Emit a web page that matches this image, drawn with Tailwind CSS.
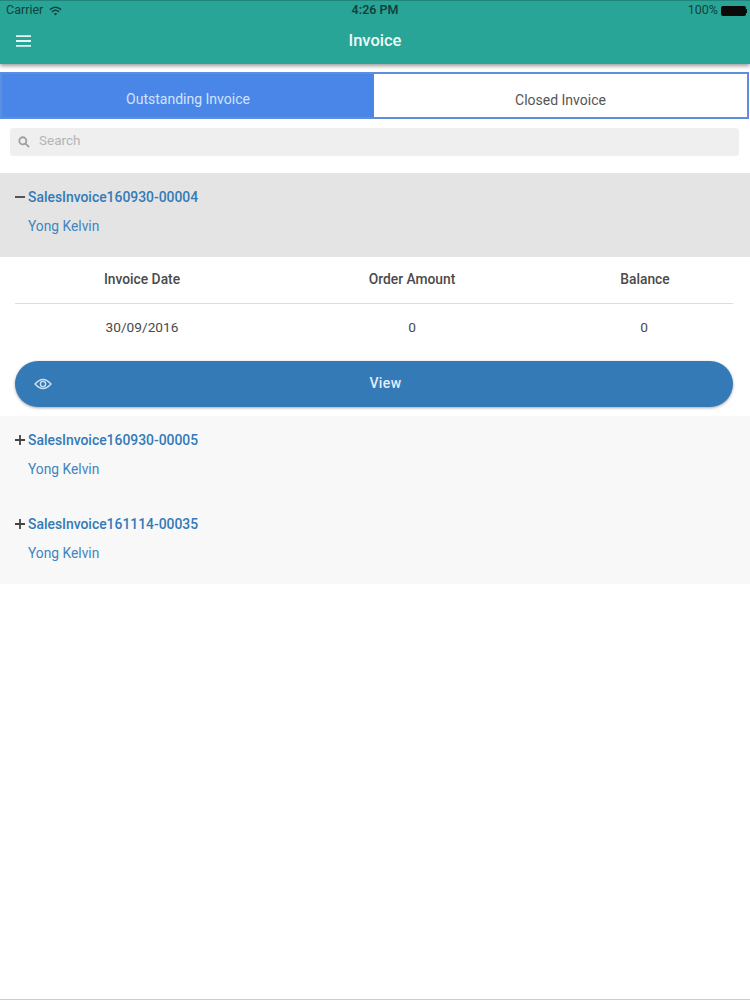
<!DOCTYPE html>
<html lang="en">
<head>
<meta charset="UTF-8" />
<title>Invoice</title>
<script src="https://cdn.jsdelivr.net/npm/@tailwindcss/browser@4"></script>
</head>
<body class="bg-white font-['Roboto',sans-serif] text-[#4a4a4a]">
<div class="w-[750px] h-[1000px] overflow-hidden flex flex-col border-b border-[#ccc]">
  <!-- header -->
  <div class="h-[64px] bg-[#28a596] border-t border-[#1f8578] shadow-[0_2px_4px_rgba(0,0,0,0.4)] text-white shrink-0">
    <div class="h-[19px] flex items-center justify-between pl-[6px] pr-[3px] text-[12.5px] text-[#12423d] relative">
      <div class="flex items-center gap-[6px]">
        <span>Carrier</span>
        <svg width="13" height="10" viewBox="0 0 13 10" fill="none" stroke="#12423d" stroke-width="1.5"><path d="M0.8 3.6Q6.5 -1.2 12.2 3.6"/><path d="M2.9 5.8Q6.5 2.8 10.1 5.8"/><path d="M6.5 9.6L4.8 7.7Q6.5 6.4 8.2 7.7Z" fill="#12423d" stroke="none"/></svg>
      </div>
      <span class="font-semibold">4:26 PM</span>
      <div class="flex items-center gap-[3px]">
        <span>100%</span>
        <span class="w-[25px] h-[10px] bg-[#0a0a0a] rounded-[2px]"></span>
        <span class="w-[1px] h-[4px] bg-[#0a0a0a] -ml-[3px]"></span>
      </div>
    </div>
    <div class="h-[42px] flex items-center justify-between pl-[16px] pr-[16px]">
      <svg width="15" height="12" viewBox="0 0 15 12"><path d="M0 1.2H15M0 6H15M0 10.8H15" stroke="#e4f5f2" stroke-width="1.8"/></svg>
      <span class="text-[16.5px] font-medium text-[#eef9f7]">Invoice</span>
      <span class="w-[15px]"></span>
    </div>
  </div>
  <!-- tabs -->
  <div class="mt-[8px] mr-[1px] h-[47px] flex border-2 border-[#5b8fe0] shrink-0">
    <div class="w-[372px] bg-[#4a86e8] text-[#d3e3fb] text-[14px] flex items-center justify-center pt-[7px]">Outstanding Invoice</div>
    <div class="flex-1 bg-white text-[#555] text-[14px] flex items-center justify-center pt-[10px]">Closed Invoice</div>
  </div>
  <!-- search -->
  <div class="ml-[10px] mr-[11px] mt-[9px] h-[28px] bg-[#efefef] rounded-[3px] flex items-start pt-[4px] pl-[8px] gap-[9px] shrink-0">
    <svg class="mt-[4px]" width="12" height="12" viewBox="0 0 13 13" fill="none" stroke="#a0a0a0" stroke-width="2"><circle cx="5.2" cy="5.2" r="3.8"/><path d="M8 8L12 12"/></svg>
    <span class="text-[13.5px] leading-[16px] text-[#b4b4b4]">Search</span>
  </div>
  <!-- open row -->
  <div class="mt-[17px] h-[84px] bg-[#e4e4e4] px-[15px] pt-[15px] shrink-0">
    <div class="flex items-center gap-[3px] text-[13.9px] leading-[18px] font-medium text-[#337ab7]">
      <svg width="10" height="10" viewBox="0 0 10 10"><path d="M0 5H10" stroke="#444" stroke-width="1.8"/></svg>
      <span>SalesInvoice160930-00004</span>
    </div>
    <div class="pl-[13px] mt-[11px] text-[13.8px] leading-[18px] text-[#3f85c0]">Yong Kelvin</div>
  </div>
  <!-- detail -->
  <div class="pl-[15px] pr-[17px] shrink-0">
    <div class="grid grid-cols-[254px_286px_178px] h-[47px] pb-[2px] items-center text-center text-[13.8px] font-medium border-b border-[#ddd]">
      <span>Invoice Date</span><span>Order Amount</span><span class="pl-[2px]">Balance</span>
    </div>
    <div class="grid grid-cols-[254px_286px_178px] h-[47px] items-center text-center text-[13.7px]">
      <span>30/09/2016</span><span>0</span><span>0</span>
    </div>
    <div class="mt-[10px] h-[46px] rounded-full bg-[#337ab7] shadow-[0_1px_3px_rgba(0,0,0,0.35)] text-white flex items-center relative">
      <svg class="ml-[19px]" width="18" height="12" viewBox="0 0 18 12" fill="none" stroke="#cfe0f0" stroke-width="1.4"><path d="M1 6Q9 -3 17 6Q9 15 1 6Z"/><circle cx="9" cy="6" r="2.6"/></svg>
      <span class="flex-1 text-center text-[14px] font-medium tracking-[0.4px] text-[#e3edf6] pr-[14px] pb-[2px]">View</span>
    </div>
  </div>
  <!-- closed rows -->
  <div class="mt-[9px] bg-[#f8f8f8] h-[168px] shrink-0">
    <div class="h-[84px] px-[15px] pt-[15px]">
      <div class="flex items-center gap-[3px] text-[13.9px] leading-[18px] font-medium text-[#337ab7]">
        <svg width="10" height="10" viewBox="0 0 10 10"><path d="M0 5H10M5 0V10" stroke="#444" stroke-width="1.8"/></svg>
        <span>SalesInvoice160930-00005</span>
      </div>
      <div class="pl-[13px] mt-[11px] text-[13.8px] leading-[18px] text-[#3f85c0]">Yong Kelvin</div>
    </div>
    <div class="h-[84px] px-[15px] pt-[15px]">
      <div class="flex items-center gap-[3px] text-[13.9px] leading-[18px] font-medium text-[#337ab7]">
        <svg width="10" height="10" viewBox="0 0 10 10"><path d="M0 5H10M5 0V10" stroke="#444" stroke-width="1.8"/></svg>
        <span>SalesInvoice161114-00035</span>
      </div>
      <div class="pl-[13px] mt-[11px] text-[13.8px] leading-[18px] text-[#3f85c0]">Yong Kelvin</div>
    </div>
  </div>
</div>
</body>
</html>
